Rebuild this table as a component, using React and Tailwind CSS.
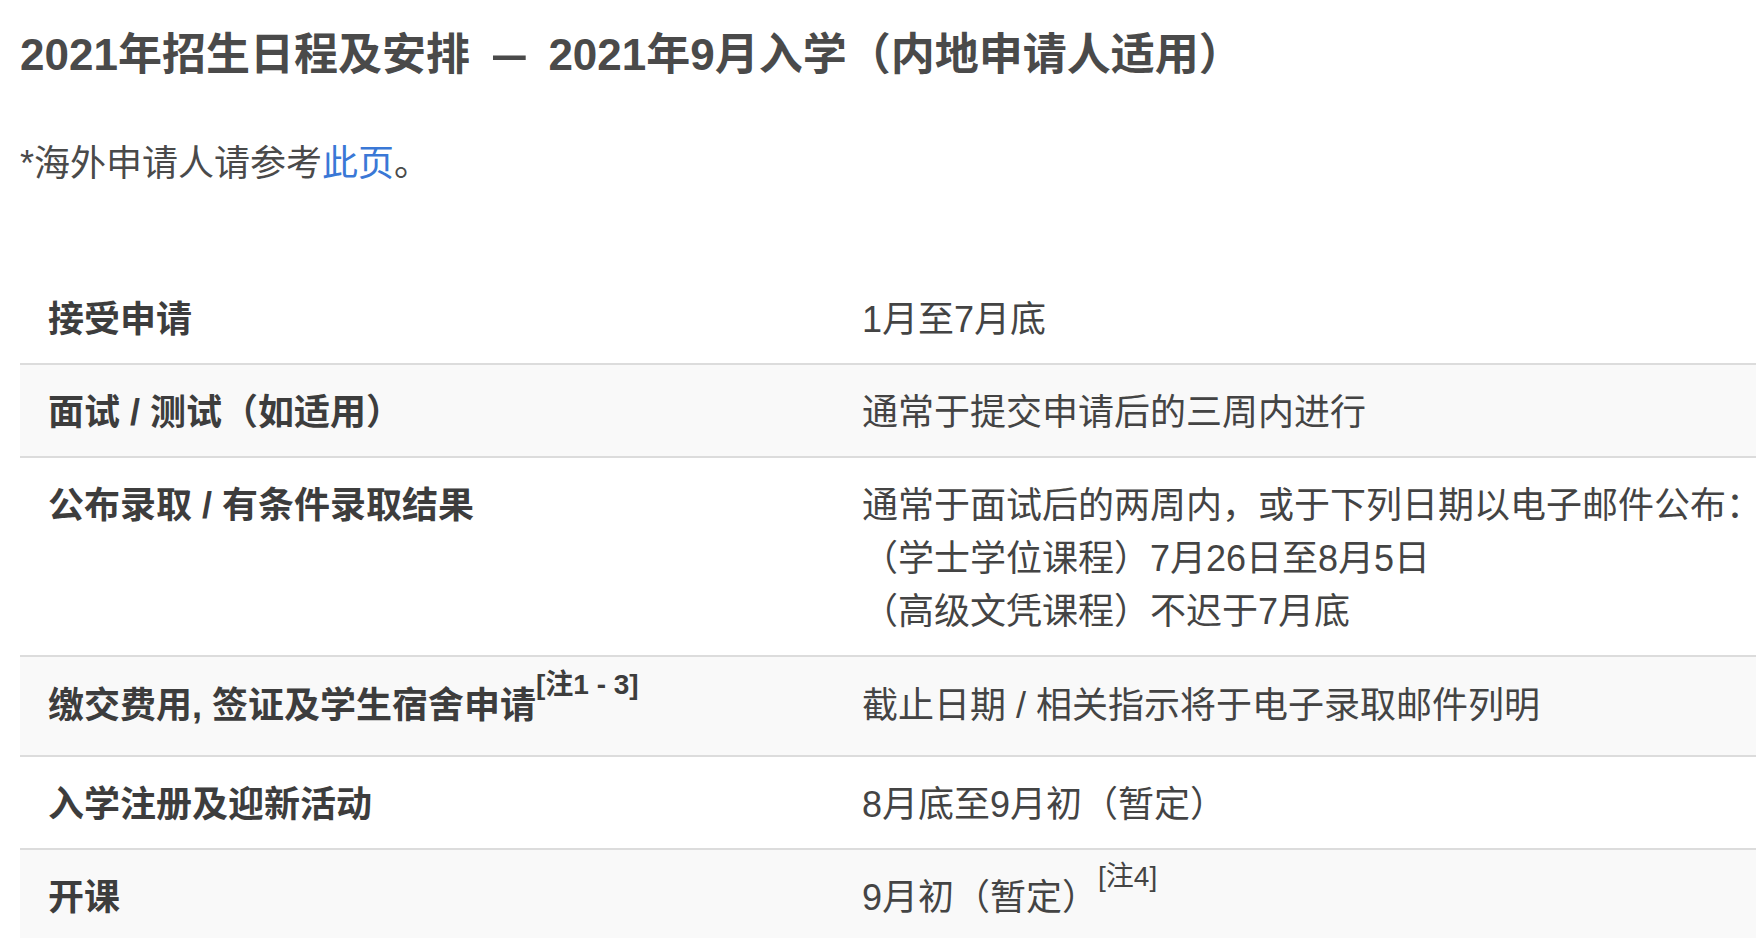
import React from "react";

const font = { fontFamily: '"Liberation Sans", "Noto Sans CJK SC", sans-serif' };

const rows = [
  { label: "接受申请", value: ["1月至7月底"] },
  { label: "面试 / 测试（如适用）", value: ["通常于提交申请后的三周内进行"], shade: true },
  {
    label: "公布录取 / 有条件录取结果",
    value: [
      "通常于面试后的两周内，或于下列日期以电子邮件公布：",
      "（学士学位课程）7月26日至8月5日",
      "（高级文凭课程）不迟于7月底",
    ],
  },
  { label: "缴交费用, 签证及学生宿舍申请", labelSup: "[注1 - 3]", value: ["截止日期 / 相关指示将于电子录取邮件列明"], shade: true, tall: true },
  { label: "入学注册及迎新活动", value: ["8月底至9月初（暂定）"] },
  { label: "开课", value: ["9月初（暂定）"], valueSup: "[注4]", shade: true },
];

export default function App() {
  return (
    <div className="w-screen h-screen overflow-hidden bg-white text-[#444444]" style={font}>
      <div className="pl-[20px] pt-[27px]">
        <h1 className="text-[44px] leading-[56px] font-bold text-[#4a4a4a] whitespace-nowrap">
          2021年招生日程及安排
          <span className="inline-block mx-[27px] scale-x-150">–</span>
          2021年9月入学（内地申请人适用）
        </h1>
        <p className="mt-[54px] text-[36px] leading-[53px] text-[#4a4a4a] whitespace-nowrap">
          *海外申请人请参考<span className="text-[#3a78d6]">此页</span>。
        </p>
        <div className="mt-[82px] w-full">
          {rows.map((r, i) => (
            <div
              key={i}
              className={`flex border-b-2 border-[#dcdcdc] ${r.shade ? "bg-[#f9f9f9]" : "bg-white"} ${
                r.tall ? "pt-[22px] pb-[23px]" : "pt-[21px] pb-[17px]"
              }`}
            >
              <div className="w-[814px] shrink-0 pl-[28px] text-[36px] leading-[53px] font-bold text-[#3d3d3d] whitespace-nowrap">
                {r.label}
                {r.labelSup && (
                  <span className="relative -top-[24px] text-[28px] font-bold leading-none">{r.labelSup}</span>
                )}
              </div>
              <div className="flex-1 pl-[28px] text-[36px] leading-[53px] text-[#444444]">
                {r.value.map((v, j) => (
                  <div key={j} className="whitespace-nowrap">
                    {v}
                    {j === r.value.length - 1 && r.valueSup && (
                      <span className="relative -top-[24px] text-[28px] leading-none">{r.valueSup}</span>
                    )}
                  </div>
                ))}
              </div>
            </div>
          ))}
        </div>
      </div>
    </div>
  );
}
